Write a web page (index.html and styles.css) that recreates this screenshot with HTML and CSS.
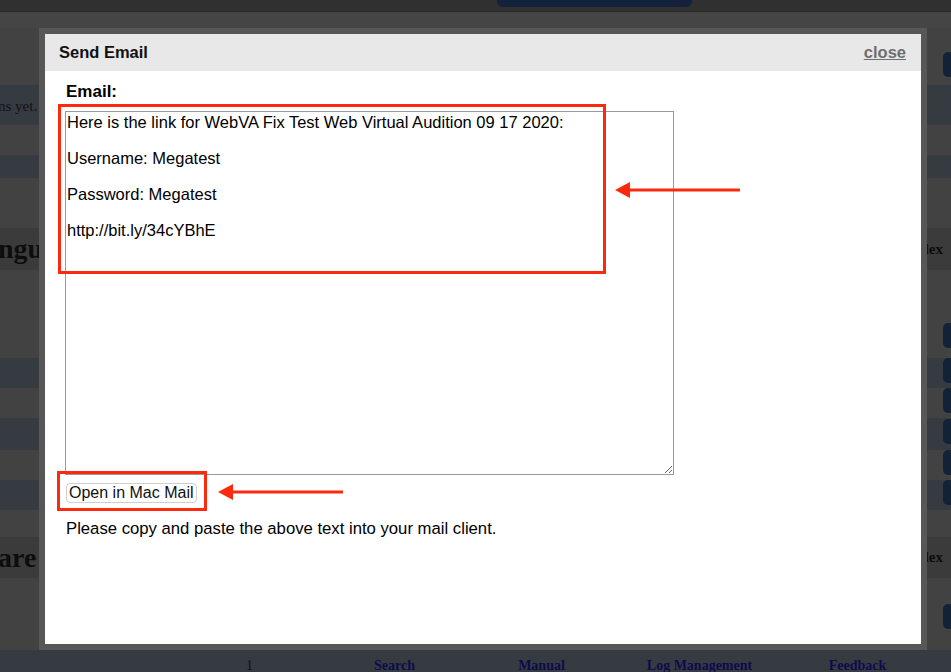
FILE: index.html
```html
<!DOCTYPE html>
<html>
  <head>
    <title>Send Email</title>
    <link rel="stylesheet" href="styles.css">
  </head>
  <body>
    <!-- dimmed page behind the dialog -->
    <div class="page">
      <div class="topbar"><div class="tab"></div></div>
      <div class="subbar"></div>
      <div class="row gray h57"><span class="rbtn off24"></span></div>
      <div class="row blue h40"><span class="note-left">ns yet.</span></div>
      <div class="row gray h30"></div>
      <div class="row blue h23"></div>
      <div class="row gray h50"></div>
      <div class="row head h42"><span class="big">ngu</span><span class="small">lex</span></div>
      <div class="row gray h88"><span class="rbtn off53"></span></div>
      <div class="row blue h30"><span class="rbtn"></span></div>
      <div class="row gray h30"><span class="rbtn"></span></div>
      <div class="row blue h32"><span class="rbtn off1"></span></div>
      <div class="row gray h30"><span class="rbtn"></span></div>
      <div class="row blue h30"><span class="rbtn"></span></div>
      <div class="row gray h27"></div>
      <div class="row head h41"><span class="big">are</span><span class="small">lex</span></div>
      <div class="row gray h72"><span class="rbtn off26"></span></div>
      <div class="footer">
        <a>1</a>
        <a>Search</a>
        <a>Manual</a>
        <a>Log Management</a>
        <a>Feedback</a>
      </div>
    </div>

    <!-- dialog -->
    <div class="dialog">
      <div class="dialog-title">
        <span>Send Email</span>
        <a class="close">close</a>
      </div>
      <div class="dialog-body">
        <div class="label">Email:</div>
        <textarea class="mail-text">Here is the link for WebVA Fix Test Web Virtual Audition 09 17 2020:

Username: Megatest

Password: Megatest

http://bit.ly/34cYBhE</textarea>
        <button class="mac-btn">Open in Mac Mail</button>
        <p class="hint">Please copy and paste the above text into your mail client.</p>
      </div>
    </div>

    <!-- red annotations drawn over the screenshot -->
    <svg class="marks" width="951" height="672" viewBox="0 0 951 672">
      <rect x="59.5" y="105.5" width="545" height="167" fill="none" stroke="#fb2a0e" stroke-width="3"/>
      <line x1="626" y1="190" x2="740" y2="190" stroke="#fb2a0e" stroke-width="3"/>
      <polygon points="615,190 630,182 630,198" fill="#fb2a0e"/>
      <rect x="58.5" y="472.5" width="147" height="37" fill="none" stroke="#fb2a0e" stroke-width="3"/>
      <line x1="230" y1="492" x2="343" y2="492" stroke="#fb2a0e" stroke-width="3"/>
      <polygon points="218,492 233,484 233,500" fill="#fb2a0e"/>
    </svg>
  </body>
</html>
```

FILE: styles.css
```css
html, body{
  margin: 0;
  padding: 0;
}
body{
  width: 951px;
  height: 672px;
  overflow: hidden;
  position: relative;
  background: #424242;
  font-family: "Liberation Serif", serif;
}

/**** dimmed background page ****/
.page{
  width: 951px;
}
.topbar{
  height: 11px;
  background: #303030;
  padding-left: 497px;
}
.tab{
  width: 195px;
  height: 7px;
  background: #13223a;
  border-radius: 0 0 6px 6px;
}
.subbar{
  height: 16px;
  border-top: 1px solid #2a2a2a;
  background: #454545;
}
.row{
  display: flex;
  justify-content: space-between;
  align-items: flex-start;
}
.gray{ background: #424242; }
.blue{ background: #363b42; }
.head{
  background: #3b3b3b;
  align-items: center;
}
.h23{ height: 23px; }
.h27{ height: 27px; }
.h30{ height: 30px; }
.h32{ height: 32px; }
.h40{ height: 40px; }
.h41{ height: 41px; }
.h42{ height: 42px; }
.h50{ height: 50px; }
.h57{ height: 57px; }
.h72{ height: 72px; }
.h88{ height: 88px; }

.rbtn{
  margin-left: auto;
  margin-right: -20px;
  width: 28px;
  height: 25px;
  border-radius: 5px;
  background: #142238;
}
.off1{ margin-top: 1px; }
.off24{ margin-top: 24px; }
.off26{ margin-top: 26px; }
.off53{ margin-top: 53px; }

.note-left{
  margin-top: 13px;
  margin-left: -2px;
  font-size: 15px;
  color: #111;
}
.big{
  font-size: 28px;
  font-weight: bold;
  color: #0d0d0d;
  margin-left: -2px;
}
.small{
  font-size: 15px;
  font-weight: bold;
  color: #0d0d0d;
  margin-right: 8px;
}

.footer{
  height: 22px;
  background: #363b42;
  display: grid;
  grid-template-columns: 145px 145px 149px 167px 149px;
  justify-items: center;
  padding-left: 177px;
  padding-top: 7px;
  box-sizing: border-box;
}
.footer a{
  font-size: 14px;
  font-weight: bold;
  color: #0c0c4c;
  line-height: 18px;
}
.footer a:first-child{
  font-weight: normal;
  color: #111;
}

/**** dialog ****/
.dialog{
  position: absolute;
  left: 39px;
  top: 28px;
  width: 876px;
  height: 610px;
  border: 6px solid #575757;
  background: #fff;
  font-family: "Liberation Sans", Arial, sans-serif;
  color: #000;
}
.dialog-title{
  height: 37px;
  background: #e8e8e8;
  display: flex;
  justify-content: space-between;
  align-items: center;
  padding: 0 15px 0 14px;
  font-size: 16.5px;
  font-weight: bold;
  color: #111;
}
.close{
  font-size: 16.5px;
  color: #6e6e6e;
  text-decoration: underline;
}
.dialog-body{
  padding-left: 20px;
}
.label{
  font-size: 17px;
  font-weight: bold;
  line-height: 20px;
  margin: 11px 0 9px 1px;
}
.mail-text{
  display: block;
  box-sizing: border-box;
  width: 609px;
  height: 364px;
  margin: 0;
  padding: 1px 1px;
  border: 1px solid #999;
  font-family: "Liberation Sans", Arial, sans-serif;
  font-size: 16.5px;
  line-height: 18px;
  color: #000;
  background: #fff;
}
.mac-btn{
  display: block;
  margin: 8px 0 0 1px;
  height: 20px;
  padding: 0 2px;
  border: 1px solid #cfcfcf;
  border-radius: 4px;
  background: #fff;
  font-family: "Liberation Sans", Arial, sans-serif;
  font-size: 16px;
  line-height: 18px;
  color: #111;
}
.hint{
  margin: 16px 0 0 1px;
  font-size: 16.7px;
  line-height: 19px;
}

/**** annotations ****/
.marks{
  position: absolute;
  left: 0;
  top: 0;
  pointer-events: none;
}
```
